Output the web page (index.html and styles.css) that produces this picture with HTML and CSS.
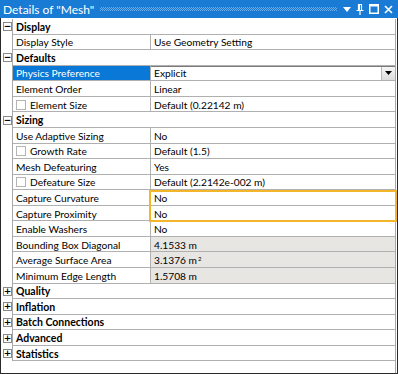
FILE: index.html
```html
<!DOCTYPE html>
<html>
<head>
<meta charset="utf-8">
<link rel="stylesheet" href="styles.css">
</head>
<body>
<div class="panel">
  <div class="title">
    <span class="ttext">Details of "Mesh"</span>
    <span class="grip"></span>
    <span class="ticons">
      <svg width="8" height="5" viewBox="0 0 8 5"><path d="M0 0H8L4 5Z" fill="#fff"/></svg>
      <svg width="8" height="11" viewBox="0 0 8 11"><path d="M2 0.5H6M2.5 0.5V6M5.5 0.5V6M0.5 6.5H7.5M4 6.5V11" stroke="#fff" stroke-width="1.2" fill="none"/><rect x="2.5" y="0.5" width="1.5" height="6" fill="#fff"/></svg>
      <svg width="10" height="10" viewBox="0 0 10 10"><rect x="0.75" y="0.75" width="8.5" height="8.5" fill="none" stroke="#fff" stroke-width="1.5"/><rect x="0.5" y="0.5" width="9" height="2" fill="#fff"/></svg>
      <svg width="9" height="9" viewBox="0 0 9 9"><path d="M1 1L8 8M8 1L1 8" stroke="#fff" stroke-width="1.6"/></svg>
    </span>
  </div>
  <div class="body">
    <div class="table">
      <div class="row"><div class="gut"><span class="tog">&#8722;</span></div><div class="cells head">Display</div></div>
      <div class="row"><div class="gut"></div><div class="cells"><div class="name">Display Style</div><div class="val">Use Geometry Setting</div></div></div>
      <div class="row"><div class="gut"><span class="tog">&#8722;</span></div><div class="cells head">Defaults</div></div>
      <div class="row"><div class="gut"></div><div class="cells"><div class="name sel">Physics Preference</div><div class="val combo"><span class="ctext">Explicit</span><span class="cbtn"><svg width="7" height="4" viewBox="0 0 7 4"><path d="M0 0H7L3.5 4Z" fill="#000"/></svg></span></div></div></div>
      <div class="row"><div class="gut"></div><div class="cells"><div class="name">Element Order</div><div class="val">Linear</div></div></div>
      <div class="row"><div class="gut"></div><div class="cells"><div class="name"><span class="chk"></span>Element Size</div><div class="val">Default (0.22142 m)</div></div></div>
      <div class="row"><div class="gut"><span class="tog">&#8722;</span></div><div class="cells head">Sizing</div></div>
      <div class="row"><div class="gut"></div><div class="cells"><div class="name">Use Adaptive Sizing</div><div class="val">No</div></div></div>
      <div class="row"><div class="gut"></div><div class="cells"><div class="name"><span class="chk"></span>Growth Rate</div><div class="val">Default (1.5)</div></div></div>
      <div class="row"><div class="gut"></div><div class="cells"><div class="name">Mesh Defeaturing</div><div class="val">Yes</div></div></div>
      <div class="row"><div class="gut"></div><div class="cells"><div class="name"><span class="chk"></span>Defeature Size</div><div class="val">Default (2.2142e-002 m)</div></div></div>
      <div class="row"><div class="gut"></div><div class="cells"><div class="name">Capture Curvature</div><div class="val">No</div></div></div>
      <div class="row"><div class="gut"></div><div class="cells"><div class="name">Capture Proximity</div><div class="val">No</div></div></div>
      <div class="row"><div class="gut"></div><div class="cells"><div class="name">Enable Washers</div><div class="val">No</div></div></div>
      <div class="row"><div class="gut"></div><div class="cells"><div class="name">Bounding Box Diagonal</div><div class="val ro">4.1533 m</div></div></div>
      <div class="row"><div class="gut"></div><div class="cells"><div class="name">Average Surface Area</div><div class="val ro">3.1376 m<sup>2</sup></div></div></div>
      <div class="row"><div class="gut"></div><div class="cells"><div class="name">Minimum Edge Length</div><div class="val ro">1.5708 m</div></div></div>
      <div class="row"><div class="gut"><span class="tog">+</span></div><div class="cells head">Quality</div></div>
      <div class="row"><div class="gut"><span class="tog">+</span></div><div class="cells head">Inflation</div></div>
      <div class="row"><div class="gut"><span class="tog">+</span></div><div class="cells head">Batch Connections</div></div>
      <div class="row"><div class="gut"><span class="tog">+</span></div><div class="cells head">Advanced</div></div>
      <div class="row"><div class="gut"><span class="tog">+</span></div><div class="cells head">Statistics</div></div>
      <div class="filler"></div>
    </div>
    <div class="hl"></div>
  </div>
</div>
</body>
</html>
```
FILE: styles.css
```css
* { box-sizing: border-box; }
html, body { margin: 0; padding: 0; background: #fff; }
body { font-family: Lato, "Noto Sans", sans-serif; font-size: 10.2px; color: #000; }
.panel { width: 398px; height: 374px; display: flex; flex-direction: column; }
.title {
  height: 18px; background: #1a7bd4; color: #fff; display: flex; align-items: center;
  padding: 0 5px 0 3px; font-size: 12px;
}
.ttext { white-space: nowrap; }
.grip {
  flex: 1; height: 4px; margin: 0 6px 0 6px;
  background: repeating-conic-gradient(#6aaae6 0 25%, transparent 0 50%) 0 0 / 2px 2px;
}
.ticons { display: flex; align-items: center; gap: 5px; }
.body {
  flex: 1; position: relative; border: 1px solid #2a2a2a; border-top: none;
  padding-right: 1px; padding-top: 1px; display: flex;
}
.table { flex: 1; display: flex; flex-direction: column; border-right: 1px solid #a8a8a8; }
.row { height: 15.57px; display: flex; }
.gut { width: 12px; border-right: 1px solid #a8a8a8; display: flex; align-items: center; padding-left: 2px; flex-shrink: 0; }
.tog {
  width: 9px; height: 9px; border: 1px solid #8a8a8a; display: flex; align-items: center; justify-content: center;
  font-size: 9px; line-height: 1; color: #000; font-family: "DejaVu Sans", sans-serif; font-weight: bold;
}
.cells { flex: 1; display: flex; border-bottom: 1px solid #b0b0b0; }
.head { font-weight: bold; align-items: center; padding-left: 3px; padding-top: 1px; font-size: 10.5px; }
.name { width: 138px; border-right: 1px solid #b0b0b0; display: flex; align-items: center; padding-left: 3px; padding-top: 1px; white-space: nowrap; flex-shrink: 0; }
.val { flex: 1; display: flex; align-items: center; padding-left: 3px; padding-top: 1px; white-space: nowrap; }
.val sup { font-size: 6px; align-self: flex-start; margin-top: 2px; margin-left: 1px; }
.ro { background: #e8e6e3; }
.sel { background: #0a78d6; color: #fff; }
.combo { border-top: 1px solid #7a7a7a; padding-right: 0; padding-top: 0; justify-content: space-between; }
.cbtn {
  width: 14px; height: 100%; background: linear-gradient(#f6f6f6, #dcdcdc); border-left: 1px solid #b8b8b8;
  display: flex; align-items: center; justify-content: center;
}
.chk { width: 10px; height: 10px; border: 1px solid #b4b4b4; background: #fff; margin: 0 4px 0 0; flex-shrink: 0; }
.filler { flex: 1; }
.hl { position: absolute; left: 148px; top: 172px; width: 248px; height: 32px; border: 2px solid #f3b52a; }
```
